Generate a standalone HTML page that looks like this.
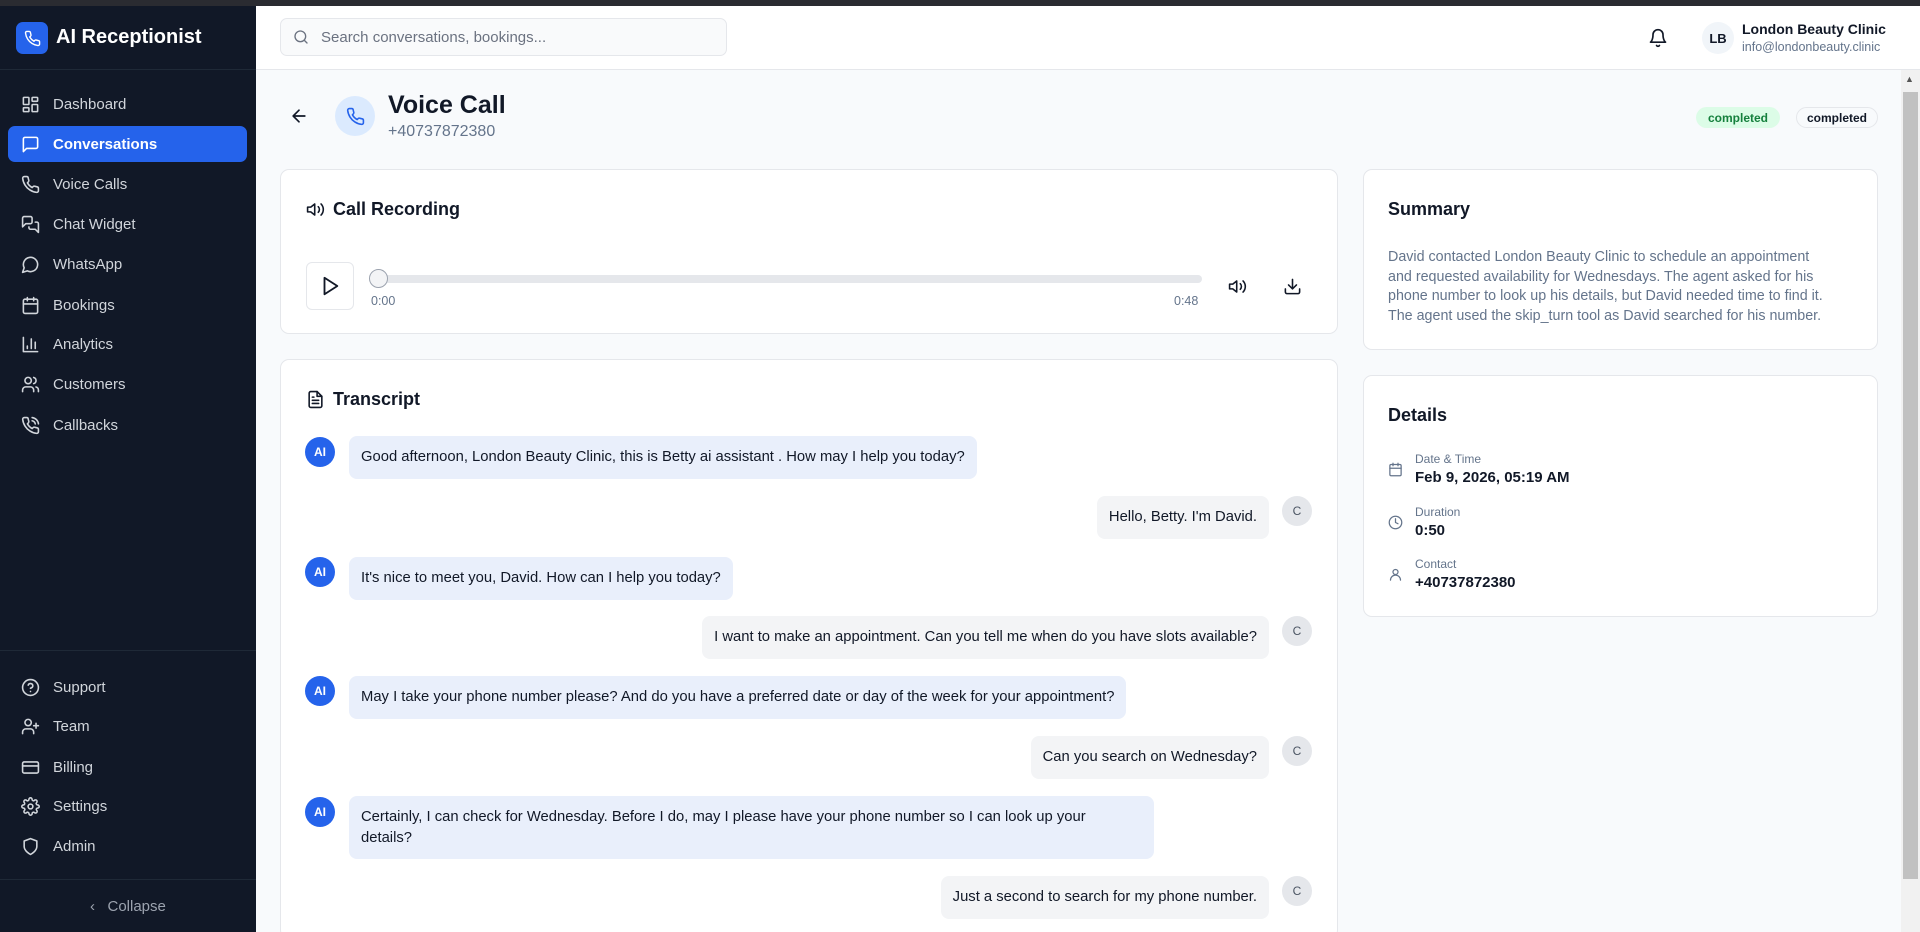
<!DOCTYPE html>
<html><head><meta charset="utf-8"><style>
*{box-sizing:border-box;margin:0;padding:0}
html{width:1920px;height:932px;overflow:hidden}
body{width:1920px;height:932px;overflow:hidden;background:#f8fafc;font-family:"Liberation Sans",Arial,sans-serif;position:relative;color:#111827}
.abs{position:absolute}
svg.i{fill:none;stroke:currentColor;stroke-width:2;stroke-linecap:round;stroke-linejoin:round}
#top{left:0;top:0;width:1920px;height:6px;background:#2a2b31}
#side{left:0;top:6px;width:256px;height:926px;background:#111827}
.nav{position:absolute;left:8px;width:239px;height:36px;border-radius:7px;color:#d1d5db;font-size:15px;display:flex;align-items:center;padding-left:13px}
.nav svg{width:19px;height:19px;margin-right:13px}
.nav.act{background:#2563eb;color:#fff;font-weight:bold}
#hdr{left:256px;top:6px;width:1664px;height:64px;background:#fff;border-bottom:1px solid #e5e7eb}
.card{position:absolute;background:#fff;border:1px solid #e5e7eb;border-radius:9px}
.ttl{font-size:18px;font-weight:bold;color:#111827}
.av{position:absolute;width:30px;height:30px;border-radius:50%;display:flex;align-items:center;justify-content:center;font-size:12px;font-weight:bold}
.ai{background:#2563eb;color:#fff;left:305px}
.cu{background:#e5e7eb;color:#4b5563;left:1282px;font-weight:normal}
.b{position:absolute;padding:0 12px;border-radius:8px;font-size:14.8px;color:#111827;line-height:21px;display:flex;align-items:center}
.bai{background:#e9effb;left:349px}
.bcu{background:#f3f4f6;right:651px}
.lbl{font-size:12px;color:#64748b}
.val{font-size:15px;color:#111827;font-weight:bold;margin-top:3px}
</style></head><body>
<div id="top" class="abs"></div>
<div id="side" class="abs">
  <div class="abs" style="left:16px;top:16px;width:32px;height:32px;background:#2563eb;border-radius:7px;display:flex;align-items:center;justify-content:center;color:#fff">
    <svg class="i" width="17" height="17" viewBox="0 0 24 24"><path d="M22 16.92v3a2 2 0 0 1-2.180 2 19.79 19.79 0 0 1-8.63-3.07 19.5 19.5 0 0 1-6-6 19.79 19.79 0 0 1-3.07-8.67A2 2 0 0 1 4.11 2h3a2 2 0 0 1 2 1.72c.13.96.36 1.9.7 2.81a2 2 0 0 1-.45 2.11L8.09 9.910a16 16 0 0 0 6 6l1.27-1.27a2 2 0 0 1 2.11-.45c.91.34 1.85.57 2.81.7A2 2 0 0 1 22 16.92z"/></svg>
  </div>
  <div class="abs" style="left:56px;top:20px;font-size:20px;font-weight:bold;color:#fff">AI Receptionist</div>
  <div class="abs" style="left:0;top:63px;width:256px;height:1px;background:#1f2937"></div>

  <div class="nav" style="top:80px"><svg class="i" viewBox="0 0 24 24"><rect x="3" y="3" width="7" height="9" rx="1"/><rect x="14" y="3" width="7" height="5" rx="1"/><rect x="14" y="12" width="7" height="9" rx="1"/><rect x="3" y="16" width="7" height="5" rx="1"/></svg>Dashboard</div>
  <div class="nav act" style="top:120px"><svg class="i" viewBox="0 0 24 24"><path d="M21 15a2 2 0 0 1-2 2H7l-4 4V5a2 2 0 0 1 2-2h14a2 2 0 0 1 2 2z"/></svg>Conversations</div>
  <div class="nav" style="top:160px"><svg class="i" viewBox="0 0 24 24"><path d="M22 16.92v3a2 2 0 0 1-2.18 2 19.79 19.79 0 0 1-8.63-3.07 19.5 19.5 0 0 1-6-6 19.79 19.79 0 0 1-3.07-8.67A2 2 0 0 1 4.11 2h3a2 2 0 0 1 2 1.72c.13.96.36 1.9.7 2.81a2 2 0 0 1-.45 2.11L8.09 9.91a16 16 0 0 0 6 6l1.27-1.27a2 2 0 0 1 2.11-.45c.91.34 1.85.57 2.81.7A2 2 0 0 1 22 16.92z"/></svg>Voice Calls</div>
  <div class="nav" style="top:200px"><svg class="i" viewBox="0 0 24 24"><path d="M14 9a2 2 0 0 1-2 2H6l-4 4V4a2 2 0 0 1 2-2h8a2 2 0 0 1 2 2z"/><path d="M18 9h2a2 2 0 0 1 2 2v11l-4-4h-6a2 2 0 0 1-2-2v-1"/></svg>Chat Widget</div>
  <div class="nav" style="top:240px"><svg class="i" viewBox="0 0 24 24"><path d="M7.9 20A9 9 0 1 0 4 16.1L2 22z"/></svg>WhatsApp</div>
  <div class="nav" style="top:281px"><svg class="i" viewBox="0 0 24 24"><rect x="3" y="4" width="18" height="18" rx="2"/><path d="M16 2v4M8 2v4M3 10h18"/></svg>Bookings</div>
  <div class="nav" style="top:320px"><svg class="i" viewBox="0 0 24 24"><path d="M3 3v18h18M18 17V9M13 17V5M8 17v-3"/></svg>Analytics</div>
  <div class="nav" style="top:360px"><svg class="i" viewBox="0 0 24 24"><path d="M16 21v-2a4 4 0 0 0-4-4H6a4 4 0 0 0-4 4v2"/><circle cx="9" cy="7" r="4"/><path d="M22 21v-2a4 4 0 0 0-3-3.87M16 3.13a4 4 0 0 1 0 7.75"/></svg>Customers</div>
  <div class="nav" style="top:401px"><svg class="i" viewBox="0 0 24 24"><path d="M22 16.92v3a2 2 0 0 1-2.18 2 19.79 19.79 0 0 1-8.63-3.07 19.5 19.5 0 0 1-6-6 19.79 19.79 0 0 1-3.07-8.67A2 2 0 0 1 4.11 2h3a2 2 0 0 1 2 1.72c.13.96.36 1.9.7 2.81a2 2 0 0 1-.45 2.11L8.09 9.91a16 16 0 0 0 6 6l1.27-1.27a2 2 0 0 1 2.11-.45c.91.34 1.85.57 2.81.7A2 2 0 0 1 22 16.92z"/><path d="M14.05 2a9 9 0 0 1 8 7.94M14.05 6A5 5 0 0 1 18 10"/></svg>Callbacks</div>

  <div class="abs" style="left:0;top:644px;width:256px;height:1px;background:#1f2937"></div>
  <div class="nav" style="top:663px"><svg class="i" viewBox="0 0 24 24"><circle cx="12" cy="12" r="10"/><path d="M9.09 9a3 3 0 0 1 5.83 1c0 2-3 3-3 3M12 17h.01"/></svg>Support</div>
  <div class="nav" style="top:702px"><svg class="i" viewBox="0 0 24 24"><path d="M16 21v-2a4 4 0 0 0-4-4H6a4 4 0 0 0-4 4v2"/><circle cx="9" cy="7" r="4"/><path d="M19 8v6M22 11h-6"/></svg>Team</div>
  <div class="nav" style="top:743px"><svg class="i" viewBox="0 0 24 24"><rect x="2" y="5" width="20" height="14" rx="2"/><path d="M2 10h20"/></svg>Billing</div>
  <div class="nav" style="top:782px"><svg class="i" viewBox="0 0 24 24"><circle cx="12" cy="12" r="3"/><path d="M19.4 15a1.65 1.65 0 0 0 .33 1.82l.06.06a2 2 0 1 1-2.83 2.83l-.06-.06a1.65 1.65 0 0 0-1.82-.33 1.65 1.65 0 0 0-1 1.51V21a2 2 0 1 1-4 0v-.09A1.65 1.65 0 0 0 9 19.4a1.65 1.65 0 0 0-1.820.33l-.06.06a2 2 0 1 1-2.83-2.83l.06-.06A1.65 1.65 0 0 0 4.68 15a1.65 1.65 0 0 0-1.51-1H3a2 2 0 1 1 0-4h.09A1.65 1.65 0 0 0 4.6 9a1.65 1.65 0 0 0-.33-1.82l-.06-.06a2 2 0 1 1 2.83-2.83l.06.06A1.65 1.65 0 0 0 9 4.68a1.65 1.65 0 0 0 1-1.51V3a2 2 0 1 1 4 0v.09a1.65 1.65 0 0 0 1 1.51 1.65 1.65 0 0 0 1.82-.33l.06-.06a2 2 0 1 1 2.83 2.83l-.06.06A1.65 1.65 0 0 0 19.4 9a1.65 1.65 0 0 0 1.51 1H21a2 2 0 1 1 0 4h-.09a1.65 1.65 0 0 0-1.51 1z"/></svg>Settings</div>
  <div class="nav" style="top:822px"><svg class="i" viewBox="0 0 24 24"><path d="M12 22s8-4 8-10V5l-8-3-8 3v7c0 6 8 10 8 10z"/></svg>Admin</div>
  <div class="abs" style="left:0;top:873px;width:256px;height:1px;background:#1f2937"></div>
  <div class="abs" style="left:90px;top:892px;font-size:15px;color:#9ca3af">‹&nbsp;&nbsp;&nbsp;Collapse</div>
</div>

<div id="hdr" class="abs">
  <div class="abs" style="left:24px;top:12px;width:447px;height:38px;border:1px solid #e5e7eb;border-radius:7px;background:#f9fafb">
    <svg class="i abs" style="left:12px;top:10px;color:#6b7280" width="16" height="16" viewBox="0 0 24 24"><circle cx="11" cy="11" r="8"/><path d="M21 21l-4.3-4.3"/></svg>
    <div class="abs" style="left:40px;top:10px;font-size:15px;color:#6b7280">Search conversations, bookings...</div>
  </div>
  <svg class="i abs" style="left:1392px;top:22px;color:#111827" width="20" height="20" viewBox="0 0 24 24"><path d="M6 8a6 6 0 0 1 12 0c0 7 3 9 3 9H3s3-2 3-9M10.3 21a1.94 1.94 0 0 0 3.4 0"/></svg>
  <div class="abs" style="left:1446px;top:16px;width:32px;height:32px;border-radius:50%;background:#f1f5f9;font-size:13px;font-weight:bold;display:flex;align-items:center;justify-content:center">LB</div>
  <div class="abs" style="left:1486px;top:15px;font-size:14px;font-weight:bold">London Beauty Clinic</div>
  <div class="abs" style="left:1486px;top:34px;font-size:12.5px;color:#64748b">info@londonbeauty.clinic</div>
</div>

<div class="abs" style="left:1901px;top:70px;width:19px;height:862px;background:#f1f1f1"></div>
<div class="abs" style="left:1903px;top:92px;width:15px;height:787px;background:#c1c1c1"></div>
<div class="abs" style="left:1905px;top:74px;font-size:9px;color:#555">▲</div>

<svg class="i abs" style="left:289px;top:106px;color:#111827" width="20" height="20" viewBox="0 0 24 24"><path d="M19 12H5M12 19l-7-7 7-7"/></svg>
<div class="abs" style="left:335px;top:96px;width:40px;height:40px;border-radius:50%;background:#dbeafe;color:#2563eb;display:flex;align-items:center;justify-content:center">
<svg class="i" width="19" height="19" viewBox="0 0 24 24"><path d="M22 16.92v3a2 2 0 0 1-2.18 2 19.79 19.79 0 0 1-8.63-3.07 19.5 19.5 0 0 1-6-6 19.79 19.79 0 0 1-3.07-8.67A2 2 0 0 1 4.11 2h3a2 2 0 0 1 2 1.72c.13.96.36 1.9.7 2.81a2 2 0 0 1-.45 2.11L8.09 9.91a16 16 0 0 0 6 6l1.27-1.27a2 2 0 0 1 2.11-.45c.91.34 1.85.57 2.81.7A2 2 0 0 1 22 16.92z"/></svg></div>
<div class="abs" style="left:388px;top:91px;font-size:25px;font-weight:bold">Voice Call</div>
<div class="abs" style="left:388px;top:123px;font-size:16px;color:#64748b">+40737872380</div>
<div class="abs" style="left:1696px;top:107px;width:84px;height:21px;border-radius:11px;background:#dcfce7;color:#15803d;font-size:12px;font-weight:bold;display:flex;align-items:center;justify-content:center">completed</div>
<div class="abs" style="left:1796px;top:107px;width:82px;height:21px;border-radius:11px;border:1px solid #e5e7eb;color:#111827;font-size:12px;font-weight:bold;display:flex;align-items:center;justify-content:center">completed</div>

<div class="card" style="left:280px;top:169px;width:1058px;height:165px">
  <svg class="i abs" style="left:25px;top:30px;color:#111827" width="19" height="19" viewBox="0 0 24 24"><path d="M11 5L6 9H2v6h4l5 4V5zM15.5 8.5a5 5 0 0 1 0 7M19 5a10 10 0 0 1 0 14"/></svg>
  <div class="abs ttl" style="left:52px;top:29px">Call Recording</div>
  <div class="abs" style="left:25px;top:92px;width:48px;height:48px;border:1px solid #e5e7eb;border-radius:6px;display:flex;align-items:center;justify-content:center">
  <svg class="i" width="22" height="22" viewBox="0 0 24 24"><path d="M6 3l14 9-14 9V3z"/></svg></div>
  <div class="abs" style="left:90px;top:105px;width:831px;height:8px;border-radius:4px;background:#e5e7eb"></div>
  <div class="abs" style="left:88px;top:99px;width:19px;height:19px;border-radius:50%;background:#f3f4f6;border:1px solid #9ca3af"></div>
  <div class="abs" style="left:90px;top:124px;font-size:12.5px;color:#64748b">0:00</div>
  <div class="abs" style="left:893px;top:124px;font-size:12.5px;color:#64748b">0:48</div>
  <svg class="i abs" style="left:947px;top:107px;color:#111827" width="19" height="19" viewBox="0 0 24 24"><path d="M11 5L6 9H2v6h4l5 4V5zM15.5 8.5a5 5 0 0 1 0 7M19 5a10 10 0 0 1 0 14"/></svg>
  <svg class="i abs" style="left:1002px;top:107px;color:#111827" width="19" height="19" viewBox="0 0 24 24"><path d="M21 15v4a2 2 0 0 1-2 2H5a2 2 0 0 1-2-2v-4M7 10l5 5 5-5M12 15V3"/></svg>
</div>

<div class="card" style="left:280px;top:359px;width:1058px;height:580px">
  <svg class="i abs" style="left:25px;top:30px;color:#111827" width="19" height="19" viewBox="0 0 24 24"><path d="M14 2H6a2 2 0 0 0-2 2v16a2 2 0 0 0 2 2h12a2 2 0 0 0 2-2V8z"/><path d="M14 2v6h6M16 13H8M16 17H8M10 9H8"/></svg>
  <div class="abs ttl" style="left:52px;top:29px">Transcript</div>
</div>

<div class="av ai" style="top:437px">AI</div>
<div class="b bai" style="top:436px;height:43px">Good afternoon, London Beauty Clinic, this is Betty ai assistant . How may I help you today?</div>
<div class="av cu" style="top:496px">C</div>
<div class="b bcu" style="top:496px;height:43px">Hello, Betty. I'm David.</div>
<div class="av ai" style="top:557px">AI</div>
<div class="b bai" style="top:557px;height:43px">It's nice to meet you, David. How can I help you today?</div>
<div class="av cu" style="top:616px">C</div>
<div class="b bcu" style="top:616px;height:43px">I want to make an appointment. Can you tell me when do you have slots available?</div>
<div class="av ai" style="top:676px">AI</div>
<div class="b bai" style="top:676px;height:43px">May I take your phone number please? And do you have a preferred date or day of the week for your appointment?</div>
<div class="av cu" style="top:736px">C</div>
<div class="b bcu" style="top:736px;height:43px">Can you search on Wednesday?</div>
<div class="av ai" style="top:797px">AI</div>
<div class="b bai" style="top:796px;height:63px;width:805px">Certainly, I can check for Wednesday. Before I do, may I please have your phone number so I can look up your<br>details?</div>
<div class="av cu" style="top:876px">C</div>
<div class="b bcu" style="top:876px;height:43px">Just a second to search for my phone number.</div>

<div class="card" style="left:1363px;top:169px;width:515px;height:181px">
  <div class="abs ttl" style="left:24px;top:29px">Summary</div>
  <div class="abs" style="left:24px;top:78px;width:470px;font-size:14.3px;line-height:19.7px;color:#64748b">David contacted London Beauty Clinic to schedule an appointment<br>and requested availability for Wednesdays. The agent asked for his<br>phone number to look up his details, but David needed time to find it.<br>The agent used the skip_turn tool as David searched for his number.</div>
</div>

<div class="card" style="left:1363px;top:375px;width:515px;height:242px">
  <div class="abs ttl" style="left:24px;top:29px">Details</div>
  <svg class="i abs" style="left:24px;top:86px;color:#64748b" width="15" height="15" viewBox="0 0 24 24"><rect x="3" y="4" width="18" height="18" rx="2"/><path d="M16 2v4M8 2v4M3 10h18"/></svg>
  <div class="abs" style="left:51px;top:76px"><div class="lbl">Date &amp; Time</div><div class="val">Feb 9, 2026, 05:19 AM</div></div>
  <svg class="i abs" style="left:24px;top:139px;color:#64748b" width="15" height="15" viewBox="0 0 24 24"><circle cx="12" cy="12" r="10"/><path d="M12 6v6l4 2"/></svg>
  <div class="abs" style="left:51px;top:129px"><div class="lbl">Duration</div><div class="val">0:50</div></div>
  <svg class="i abs" style="left:24px;top:191px;color:#64748b" width="15" height="15" viewBox="0 0 24 24"><circle cx="12" cy="8" r="4"/><path d="M20 21a8 8 0 0 0-16 0"/></svg>
  <div class="abs" style="left:51px;top:181px"><div class="lbl">Contact</div><div class="val">+40737872380</div></div>
</div>
</body></html>
